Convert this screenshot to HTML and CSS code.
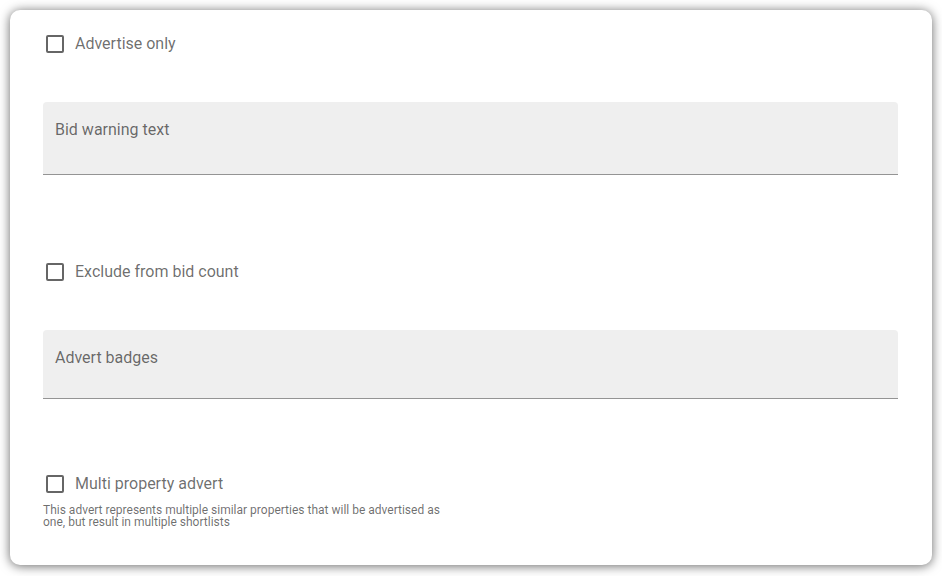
FILE: index.html
```html
<!DOCTYPE html>
<html lang="en">
<head>
  <meta charset="UTF-8" />
  <meta name="viewport" content="width=device-width, initial-scale=1.0"/>
  <title>Advert options</title>
  <link rel="stylesheet" href="styles.css">
</head>
<body>
  <div class="card">
    <label class="check-row">
      <span class="box"></span>
      <span class="check-label">Advertise only</span>
    </label>

    <div class="field field-warning">
      <span class="field-label">Bid warning text</span>
    </div>

    <label class="check-row row-exclude">
      <span class="box"></span>
      <span class="check-label">Exclude from bid count</span>
    </label>

    <div class="field field-badges">
      <span class="field-label">Advert badges</span>
    </div>

    <label class="check-row row-multi">
      <span class="box"></span>
      <span class="check-label">Multi property advert</span>
    </label>
    <p class="hint">This advert represents multiple similar properties that will be advertised as one, but result in multiple shortlists</p>
  </div>
</body>
</html>
```

FILE: styles.css
```css
:root {
  --text-muted: rgba(0,0,0,0.58);
  --field-bg: #efefef;
  --field-line: #949494;
}
body {
  margin: 0;
  background: #fff;
  font-family: Roboto, "Noto Sans", sans-serif;
  color: var(--text-muted);
}
/* Main card */
.card {
  margin: 10px 10px 11px;
  height: 555px;
  box-sizing: border-box;
  padding: 22px 34px 0 33px;
  background: #fff;
  border-radius: 10px;
  box-shadow: 0 1px 11px rgba(0,0,0,0.6);
  display: flex;
  flex-direction: column;
}
/* Checkbox rows */
.check-row {
  display: flex;
  align-items: center;
  height: 24px;
  gap: 11px;
  padding-left: 3px;
}
.box {
  width: 18px;
  height: 18px;
  box-sizing: border-box;
  border: 2px solid rgba(0,0,0,0.6);
  border-radius: 2px;
  flex-shrink: 0;
}
.check-label {
  font-size: 16px;
  line-height: 20px;
  color: var(--text-muted);
}
.row-exclude { margin-top: 85px; }
.row-multi { margin-top: 73px; }
/* Filled inputs */
.field {
  margin-top: 46px;
  background: var(--field-bg);
  border-radius: 4px 4px 0 0;
  border-bottom: 1px solid var(--field-line);
  padding: 18px 12px 0;
  box-sizing: border-box;
}
.field-warning { height: 73px; }
.field-badges { height: 69px; }
.field-label {
  display: block;
  font-size: 16px;
  line-height: 20px;
  color: var(--text-muted);
}
.hint {
  margin: 8px 0 0;
  width: 410px;
  font-size: 12px;
  line-height: 12px;
  color: var(--text-muted);
}
```
